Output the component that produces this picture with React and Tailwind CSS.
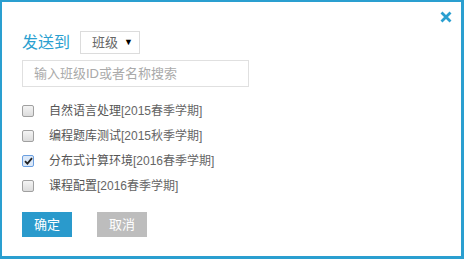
import { useState } from "react";

const courses = [
  { name: "自然语言处理", term: "[2015春季学期]", checked: false },
  { name: "编程题库测试", term: "[2015秋季学期]", checked: false },
  { name: "分布式计算环境", term: "[2016春季学期]", checked: true },
  { name: "课程配置", term: "[2016春季学期]", checked: false },
];

function Box({ checked, onClick }) {
  return (
    <span
      onClick={onClick}
      className={`flex h-[12px] w-[12px] items-center justify-center rounded-[2px] border ${
        checked ? "border-[#6b9fe0] bg-[#dbe8f8]" : "border-[#a0a0a0] bg-gradient-to-b from-[#f4f4f4] to-[#dcdcdc]"
      }`}
    >
      {checked && (
        <svg width="9" height="8" viewBox="0 0 9 8">
          <path d="M1 4.2 L3.4 6.6 L8 1.2" fill="none" stroke="#222" strokeWidth="1.8" />
        </svg>
      )}
    </span>
  );
}

export default function App() {
  const [items, setItems] = useState(courses);

  const toggle = (i) =>
    setItems(items.map((c, j) => (j === i ? { ...c, checked: !c.checked } : c)));

  return (
    <div
      className="relative h-[259px] w-[464px] border-t-2 border-l-2 border-r-[3px] border-b-[3px] border-[#2a9fd0] bg-white pl-[20px] pt-[29px]"
      style={{ fontFamily: '"Liberation Sans", "Noto Sans CJK SC", sans-serif' }}
    >
      {/* close */}
      <button className="absolute right-[9px] top-[9px] text-[#2a9fd0]">
        <svg width="12" height="12" viewBox="0 0 12 12">
          <path d="M1.5 1.5 L10.5 10.5 M10.5 1.5 L1.5 10.5" stroke="currentColor" strokeWidth="2.8" />
        </svg>
      </button>

      {/* header */}
      <div className="flex items-center gap-[10px]">
        <h2 className="text-[16px] leading-[23px] text-[#2a9fd0]">发送到</h2>
        <div className="flex h-[23px] w-[60px] items-center justify-between border border-[#dcdcdc] pl-[11px] pr-[6px] text-[13px] text-[#666]">
          <span>班级</span>
          <span className="text-[9px] text-black">▼</span>
        </div>
      </div>

      {/* search */}
      <input
        className="mt-[6px] h-[27px] w-[227px] border border-[#e0e0e0] px-[11px] text-[13px] text-[#333] outline-none placeholder:text-[#aaa]"
        placeholder="输入班级ID或者名称搜索"
      />

      {/* course list */}
      <ul className="mt-[11px]">
        {items.map((c, i) => (
          <li key={c.name} className="flex h-[25px] items-center text-[12px] text-[#555]">
            <Box checked={c.checked} onClick={() => toggle(i)} />
            <span className="ml-[15px]" onClick={() => toggle(i)}>
              {c.name}
              <span className="text-[#666]">{c.term}</span>
            </span>
          </li>
        ))}
      </ul>

      {/* actions */}
      <div className="mt-[14px] flex gap-[25px]">
        <button className="h-[25px] w-[50px] bg-[#2a9acc] text-[13px] text-white">确定</button>
        <button className="h-[25px] w-[50px] bg-[#bdbdbd] text-[13px] text-white">取消</button>
      </div>
    </div>
  );
}
